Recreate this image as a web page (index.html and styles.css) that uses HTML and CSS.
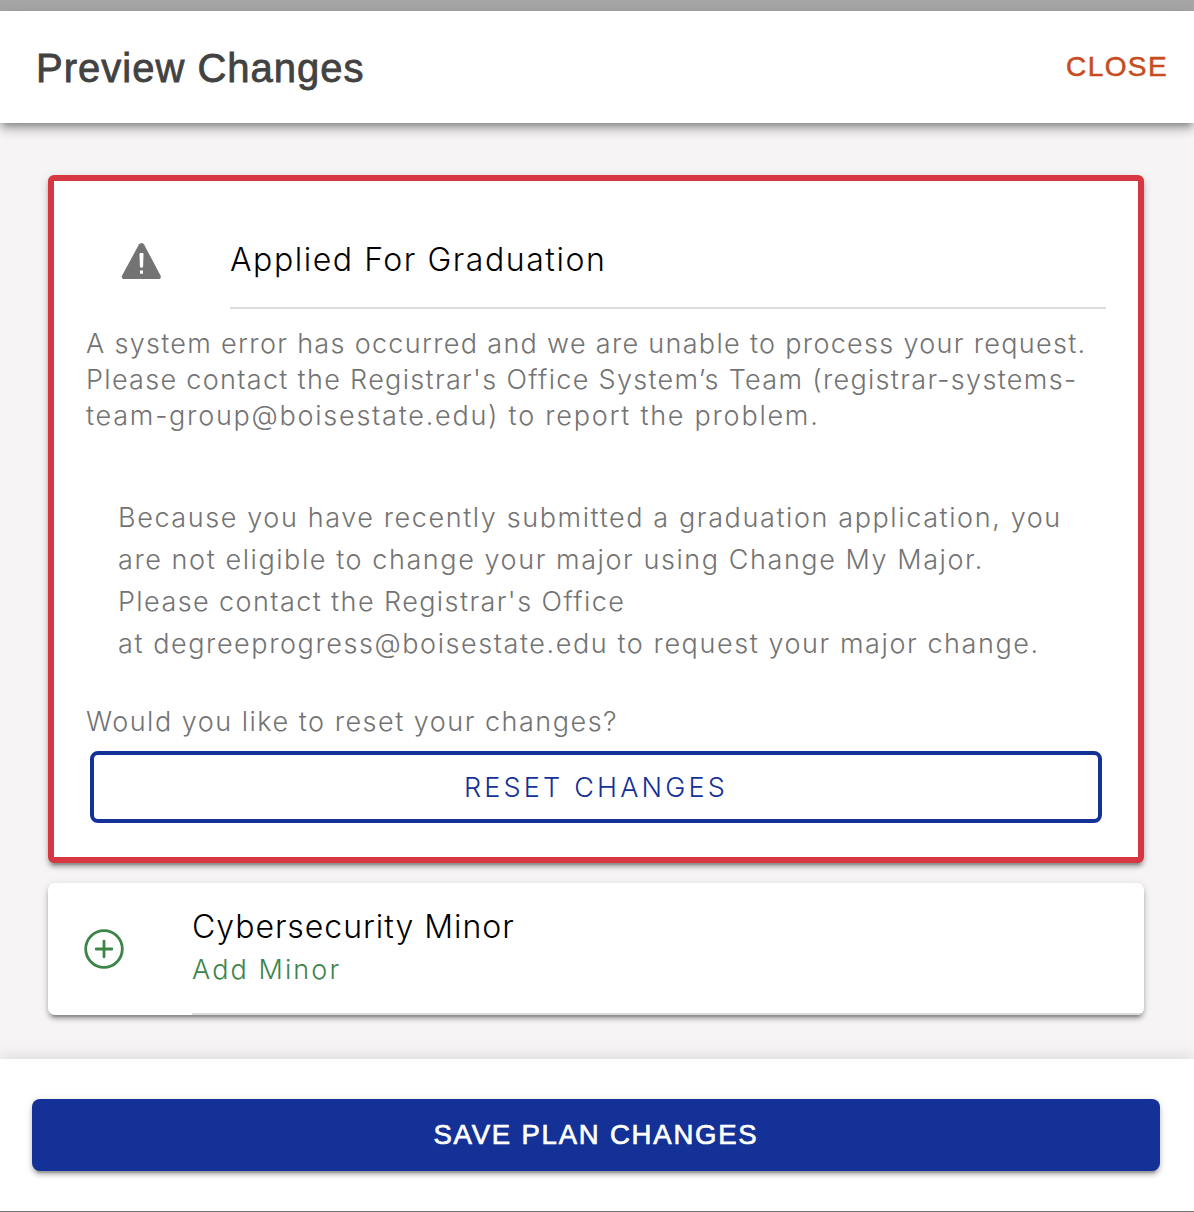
FILE: index.html
```html
<!DOCTYPE html>
<html lang="en">
<head>
<meta charset="utf-8">
<title>Preview Changes</title>
<link rel="stylesheet" href="styles.css">
</head>
<body>
<div class="modal">
  <header class="toolbar">
    <h1 class="title">Preview Changes</h1>
    <button class="close">CLOSE</button>
  </header>
  <main class="content">
    <section class="card card-error">
      <div class="item">
        <svg class="icon-warning" viewBox="0 0 40 38" width="40" height="38"><path fill="#737373" d="M17.900 2.600a3 3 0 0 1 5.200 0l16.400 31c1 1.900-.2 3.400-2.200 3.400H3.200c-2 0-3.100-1.500-2.100-3.400z"/><path fill="#fff" d="M18.500 12.200q0-1.200 1-1.200h2q1 0 1 1.200l-.4 12.200q-.1 1.400-1.600 1.400t-1.600-1.400zM19 28.500h3v3.200h-3z"/></svg>
        <h2 class="item-title">Applied For Graduation</h2>
      </div>
      <p class="message">
        <span class="m1">A system error has occurred and we are unable to process your request.</span>
        <span class="m2">Please contact the Registrar's Office System’s Team (registrar-systems-</span>
        <span class="m3">team-group@boisestate.edu) to report the problem.</span>
      </p>
      <p class="message detail">
        <span class="d1">Because you have recently submitted a graduation application, you</span>
        <span class="d2">are not eligible to change your major using Change My Major.</span>
        <span class="d3">Please contact the Registrar's Office</span>
        <span class="d4">at degreeprogress@boisestate.edu to request your major change.</span>
      </p>
      <p class="message question"><span class="q1">Would you like to reset your changes?</span></p>
      <button class="reset">RESET CHANGES</button>
    </section>
    <section class="card card-minor">
      <svg class="icon-add" viewBox="0 0 40 40" width="40" height="40" fill="none" stroke="#3d8449"><circle cx="20" cy="20" r="18.300" stroke-width="2.800"/><path stroke-width="2.800" stroke-linecap="round" d="M12.200 20h15.600M20 12.200v15.600"/></svg>
      <div class="minor-text">
        <h2 class="minor-title">Cybersecurity Minor</h2>
        <p class="minor-action">Add Minor</p>
      </div>
    </section>
  </main>
  <footer class="footer"><button class="save">SAVE PLAN CHANGES</button></footer>
</div>
</body>
</html>
```
FILE: styles.css
```css
* { box-sizing: border-box; }
body { margin: 0; background: #a6a6a6; font-family: Inter, sans-serif; font-weight: 300; }
h1, h2, p { margin: 0; font-weight: inherit; }
button { font: inherit; padding: 0; border: 0; background: none; }
.modal { display: flex; flex-direction: column; height: 1212px; padding-top: 11px; border-bottom: 1px solid #737377; overflow: hidden; }
.toolbar { position: relative; display: flex; justify-content: space-between; height: 112px; padding: 0 26px 0 36px; background: #fff; font-family: "Liberation Sans", sans-serif; box-shadow: 0 4px 8px -2px rgba(0,0,0,.4), 0 8px 10px rgba(0,0,0,.14), 0 2px 20px rgba(0,0,0,.06); }
.title { font-size: 40px; font-weight: 400; line-height: 114px; letter-spacing: 1px; color: #424242; -webkit-text-stroke: .8px #424242; white-space: nowrap; }
.close { font-size: 28px; font-weight: 400; line-height: 112px; letter-spacing: 1.4px; color: #c84b20; -webkit-text-stroke: .5px #c84b20; }
.content { flex: 1; padding: 52px 50px 0 48px; background: #f6f4f5; }
.card { background: #fff; border-radius: 7px; box-shadow: 0 6px 2px -4px rgba(0,0,0,.2), 0 4px 4px rgba(0,0,0,.24), 0 2px 10px rgba(0,0,0,.12); }
.card-error { height: 688px; padding: 32px; border: 6px solid #d73741; border-radius: 6px; }
.item { display: flex; height: 96px; padding-left: 35px; }
.icon-warning { margin-top: 29px; flex: none; }
.item-title { width: 876px; height: 96px; margin-left: 69px; border-bottom: 2px solid #dcdcdc; font-size: 32px; line-height: 94px; letter-spacing: 1.55px; color: #000; white-space: nowrap; }
.message { padding-top: 17px; font-size: 27px; line-height: 36px; color: #737373; }
.message span { display: block; white-space: nowrap; }
.m1, .m2 { letter-spacing: 1.31px; }
.m3 { letter-spacing: 1.75px; }
.d1 { letter-spacing: 1.6px; }
.d2, .d4 { letter-spacing: 1.57px; }
.d3 { letter-spacing: 1.41px; }
.q1 { letter-spacing: 1.5px; }
.detail { padding: 63px 0 0 32px; line-height: 42px; }
.question { padding-top: 39px; }
.reset { display: block; width: 1012px; height: 72px; margin: 11px 0 0 4px; border: 4px solid #133196; border-radius: 8px; color: #133196; font-size: 27px; letter-spacing: 3.2px; }
.card-minor { display: flex; height: 132px; margin-top: 20px; padding-left: 36px; overflow: hidden; }
.icon-add { margin-top: 46px; flex: none; }
.minor-text { flex: 1; margin-left: 68px; padding-top: 21px; border-bottom: 2px solid #dcdcdc; }
.minor-title { font-size: 32px; line-height: 46px; letter-spacing: .97px; color: #000; }
.minor-action { font-size: 27px; line-height: 40px; letter-spacing: 2.1px; color: #3d8449; }
.footer { position: relative; height: 152px; padding: 40px 34px 0 32px; background: #fff; box-shadow: 0 -2px 16px rgba(0,0,0,.12); }
.save { display: block; width: 100%; height: 72px; border-radius: 8px; background: #133196; color: #fff; font: 400 27.5px "Liberation Sans", sans-serif; letter-spacing: 1.8px; -webkit-text-stroke: .7px #fff; box-shadow: 0 6px 2px -4px rgba(0,0,0,.2), 0 4px 4px rgba(0,0,0,.2), 0 2px 10px rgba(0,0,0,.12); }
```
